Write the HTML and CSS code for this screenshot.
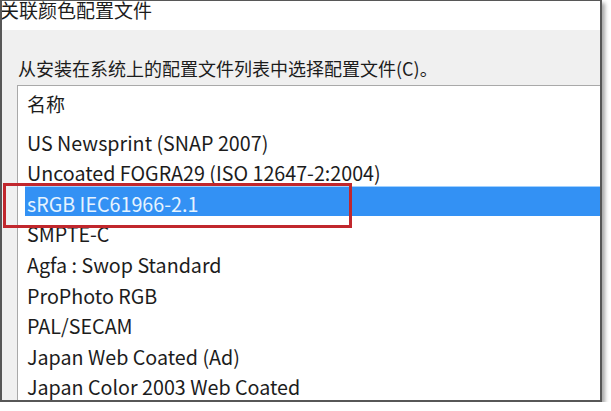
FILE: index.html
```html
<!DOCTYPE html>
<html lang="zh-CN">
<head>
    <meta charset="UTF-8">
    <meta name="viewport" content="width=device-width, initial-scale=1.0">
    <title>关联颜色配置文件</title>
    <link rel="stylesheet" href="styles.css">
</head>
<body>
    <div class="dialog">
        <div class="title">关联颜色配置文件</div>
        <div class="content">
            <p class="prompt">从安装在系统上的配置文件列表中选择配置文件(C)。</p>
            <div class="list">
                <div class="list-head">名称</div>
                <ul class="rows">
                    <li>US Newsprint (SNAP 2007)</li>
                    <li>Uncoated FOGRA29 (ISO 12647-2:2004)</li>
                    <li class="selected">sRGB IEC61966-2.1</li>
                    <li>SMPTE-C</li>
                    <li>Agfa : Swop Standard</li>
                    <li>ProPhoto RGB</li>
                    <li>PAL/SECAM</li>
                    <li>Japan Web Coated (Ad)</li>
                    <li>Japan Color 2003 Web Coated</li>
                </ul>
            </div>
        </div>
        <div class="callout"></div>
    </div>
</body>
</html>
```

FILE: styles.css
```css
body {
    margin: 0;
    background-color: #fff;
    font-family: "Noto Sans CJK SC", "Noto Sans", sans-serif;
    color: #1c1c1c;
}

.dialog {
    position: relative;
    box-sizing: border-box;
    width: 602px;
    height: 402px;
    border: 2px solid #575757;
    border-top-width: 1px;
    box-shadow: 3px 3px 4px rgba(0, 0, 0, 0.35);
    display: flex;
    flex-direction: column;
    overflow: hidden;
}

.title {
    height: 30px;
    font-size: 19px;
    line-height: 20px;
    margin-top: -1px;
    margin-left: -2px;
    background-color: #fff;
}

.content {
    flex: 1;
    display: flex;
    flex-direction: column;
    background-color: #f0f0f0;
}

.prompt {
    margin: 0;
    height: 55px;
    box-sizing: border-box;
    padding: 27px 0 0 16px;
    font-size: 18px;
    line-height: 22px;
}

.list {
    flex: 1;
    margin-left: 15px;
    background-color: #fff;
    border-left: 1px solid #a9a9a9;
    border-top: 1px solid #a9a9a9;
}

.list-head {
    height: 39px;
    padding-left: 9px;
    font-size: 19px;
    line-height: 36px;
}

.rows {
    list-style: none;
    margin: 0;
    padding: 0;
}

.rows li {
    height: 30.6px;
    padding-left: 9px;
    font-size: 19.7px;
    line-height: 35px;
    white-space: nowrap;
}

.rows li.selected {
    margin-left: 7px;
    padding-left: 2px;
    background-color: #3391f4;
    border-top: 1px solid #9fd0ff;
    box-sizing: border-box;
    line-height: 33px;
    color: #e6f3ff;
}

.callout {
    position: absolute;
    left: 1px;
    top: 182px;
    width: 349px;
    height: 45px;
    box-sizing: border-box;
    border: 3px solid #c1272d;
}
```
